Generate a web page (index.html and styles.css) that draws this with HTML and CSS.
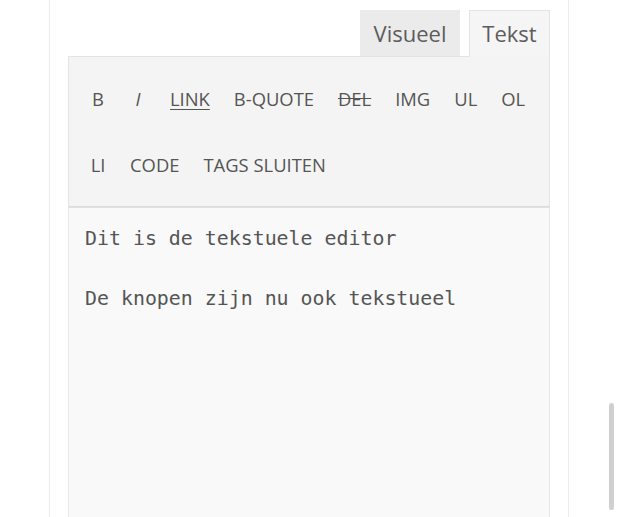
FILE: index.html
```html
<!DOCTYPE html>
<html lang="nl">
<head>
<meta charset="utf-8">
<title>Editor</title>
<link rel="stylesheet" href="styles.css">
</head>
<body>
<div class="panel">
  <div class="editor">
    <div class="tabs">
      <div class="tab tab-visual">Visueel</div>
      <div class="tab tab-text">Tekst</div>
    </div>
    <div class="toolbar">
      <span class="qt">B</span>
      <span class="qt qt-i">I</span>
      <span class="qt qt-link">LINK</span>
      <span class="qt">B-QUOTE</span>
      <span class="qt qt-del">DEL</span>
      <span class="qt">IMG</span>
      <span class="qt">UL</span>
      <span class="qt">OL</span>
      <span class="qt">LI</span>
      <span class="qt">CODE</span>
      <span class="qt">TAGS SLUITEN</span>
    </div>
    <div class="textarea">Dit is de tekstuele editor

De knopen zijn nu ook tekstueel</div>
  </div>
</div>
<div class="scrollbar"></div>
</body>
</html>
```

FILE: styles.css
```css
html, body {
  margin: 0;
  padding: 0;
  background: #ffffff;
  overflow: hidden;
}

body {
  font-family: "Open Sans", "Liberation Sans", sans-serif;
  color: #555555;
}

.panel {
  margin-left: 49px;
  width: 482px;
  min-height: 517px;
  padding: 10px 18px 0;
  border-left: 1px solid #ececec;
  border-right: 1px solid #ececec;
}

.tabs {
  display: flex;
  justify-content: flex-end;
  align-items: flex-start;
  gap: 9px;
  position: relative;
  z-index: 1;
}

.tab {
  box-sizing: border-box;
  font-size: 22px;
  color: #5c5c5c;
  height: 46px;
  line-height: 44px;
  text-align: center;
  border: 1px solid transparent;
  border-bottom: 0;
  background: #ebebeb;
}

.tab-visual {
  width: 100px;
  border-color: #ebebeb;
}

.tab-text {
  width: 81px;
  height: 47px;
  margin-bottom: -1px;
  background: #f5f5f5;
  border-color: #e4e4e4;
}

.toolbar {
  display: flex;
  flex-wrap: wrap;
  column-gap: 24px;
  padding: 9px 16px 8px 21px;
  background: #f4f4f4;
  border: 1px solid #e4e4e4;
  border-bottom: 1px solid #dcdcdc;
}

.qt {
  font-size: 18.4px;
  min-width: 16px;
  text-align: center;
  height: 66px;
  line-height: 66px;
  color: #555555;
}

.qt-i {
  font-style: italic;
}

.qt-link {
  text-decoration: underline;
  text-underline-offset: 3px;
}

.qt-del {
  text-decoration: line-through;
}

.textarea {
  font-family: "DejaVu Sans Mono", "Liberation Mono", monospace;
  font-size: 19.9px;
  line-height: 30px;
  color: #555555;
  white-space: pre-wrap;
  background: #f9f9f9;
  border: 1px solid #e8e8e8;
  border-top: 1px solid #e0e0e0;
  padding: 16px 16px;
  height: 320px;
}

.scrollbar {
  position: fixed;
  right: 5px;
  top: 403px;
  width: 5px;
  height: 107px;
  border-radius: 3px;
  background: #d0d0d0;
}
```
